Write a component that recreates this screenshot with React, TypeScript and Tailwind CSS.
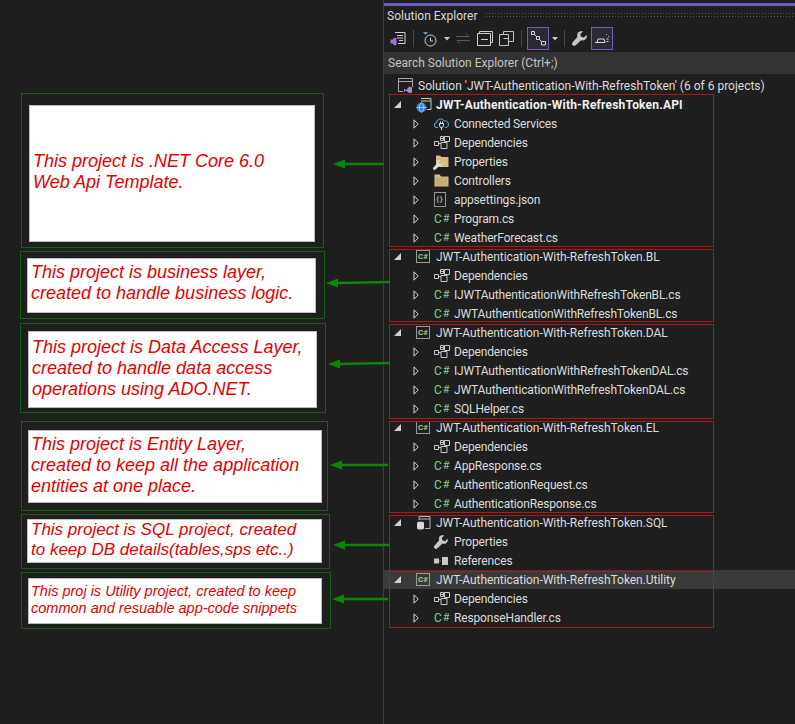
import type { ReactNode } from "react";

const notes = [
  {
    box: "mt-[93px] ml-[21px] h-[155px] w-[303px] pt-[11px] pl-[7px]",
    card: "h-[137px] w-[286px] pt-[45px] pl-[3px] text-[18px] leading-[21px]",
    lines: ["This project is .NET Core 6.0", "Web Api Template."],
  },
  {
    box: "mt-[3px] ml-[20px] h-[68px] w-[305px] pt-[6px] pl-[6px]",
    card: "h-[55px] w-[289px] pt-[3px] pl-[3px] text-[18px] leading-[21px]",
    lines: ["This project is business layer,", "created to handle business logic."],
  },
  {
    box: "mt-[4px] ml-[20px] h-[90px] w-[306px] pt-[7px] pl-[7px]",
    card: "h-[77px] w-[289px] pt-[5px] pl-[3px] text-[18px] leading-[21px]",
    lines: ["This project is Data Access Layer,", "created to handle data access", "operations using ADO.NET."],
  },
  {
    box: "mt-[8px] ml-[21px] h-[90px] w-[307px] pt-[8px] pl-[6px]",
    card: "h-[73px] w-[294px] pt-[3px] pl-[2px] text-[18px] leading-[21px]",
    lines: ["This project is Entity Layer,", "created to keep all the application", "entities at one place."],
  },
  {
    box: "mt-[3px] ml-[21px] h-[55px] w-[309px] pt-[4px] pl-[5px]",
    card: "h-[44px] w-[295px] pl-[3px] text-[17px] leading-[20px]",
    lines: ["This project is SQL project, created", "to keep DB details(tables,sps etc..)"],
  },
  {
    box: "mt-[3px] ml-[21px] h-[57px] w-[310px] pt-[5px] pl-[6px]",
    card: "h-[46px] w-[294px] pt-[4px] pl-[2px] text-[14.5px] leading-[17px]",
    lines: ["This proj is Utility project, created to keep", "common and resuable app-code snippets"],
  },
];

const redBoxes = [
  "top-[94px] h-[153px]",
  "top-[249px] h-[73px]",
  "top-[324px] h-[95px]",
  "top-[421px] h-[92px]",
  "top-[515px] h-[57px]",
  "top-[571px] h-[57px]",
];

const arrows = [
  { x1: 333, y1: 164, x2: 384, y2: 164 },
  { x1: 326, y1: 283, x2: 390, y2: 282 },
  { x1: 328, y1: 364, x2: 389, y2: 363 },
  { x1: 330, y1: 465, x2: 388, y2: 465 },
  { x1: 333, y1: 545, x2: 389, y2: 545 },
  { x1: 332, y1: 599, x2: 388, y2: 599 },
];

function Chevron() {
  return (
    <svg width="6" height="10" viewBox="0 0 6 10" fill="none">
      <path d="M1 .8v8.400L5.200 5z" stroke="#d4d4d4" />
    </svg>
  );
}

function Expanded() {
  return (
    <svg width="7" height="7" viewBox="0 0 7 7">
      <path d="M7 0v7H0z" fill="#cfcfcf" />
    </svg>
  );
}

function CsFile() {
  return (
    <span className="flex w-[15px] items-center text-[12px] leading-none font-normal text-[#85cc8a]">
      C<span className="ml-px text-[11px]">#</span>
    </span>
  );
}

function CsProject() {
  return (
    <span className="flex h-[13px] w-[14px] items-center justify-center border border-[#9a9a9a] text-[8px] leading-none font-bold text-[#8fce93]">
      C#
    </span>
  );
}

function ApiProject() {
  return (
    <svg width="16" height="16" viewBox="0 0 16 16" fill="none">
      <path d="M5 1.500h10v11H11" stroke="#c8c8c8" />
      <path d="M5 4h10" stroke="#c8c8c8" />
      <circle cx="5.500" cy="10.500" r="5" fill="#2f7fd6" />
      <path d="M.5 10.500h10M5.500 5.500c-3 3-3 7 0 10M5.500 5.500c3 3 3 7 0 10" stroke="#bcdcff" strokeWidth=".8" />
    </svg>
  );
}

function SqlProject() {
  return (
    <svg width="15" height="15" viewBox="0 0 15 15" fill="none">
      <path d="M3 5V1.500h11v12H9M3 4h11" stroke="#b5b5b5" />
      <ellipse cx="4.500" cy="8" rx="3.500" ry="1.500" fill="#d8d8d8" />
      <path d="M1 8v5c0 1 1.500 1.500 3.500 1.500S8 14 8 13V8z" fill="#d8d8d8" />
    </svg>
  );
}

function Deps() {
  return (
    <svg width="16" height="13" viewBox="0 0 16 13" fill="none" stroke="#c8c8c8">
      <path d="M.5 5.500h4v4h-4zM4.500 7.500H7M7 2.500h3M10.500.5h5v5h-5zM6.500.5h3v4h-3zM7 6.500h6v6H7z" />
    </svg>
  );
}

function Wrench({ color = "#c8c8c8", size = 14 }: { color?: string; size?: number }) {
  return (
    <svg width={size} height={size} viewBox="0 0 16 16">
      <path
        d="M15.500 4.200 12.600 7l-3-.9L8.800 3.300 11.700.5c-2-.7-4.200-.2-5.300 1.300-1 1.300-1 3-.5 4.300L.7 12a2.200 2.200 0 0 0 3.200 3.100l5.800-5.300c1.400.5 3.100.3 4.400-.8 1.500-1.200 2.100-3 1.400-4.800z"
        fill={color}
      />
    </svg>
  );
}

function PropsFolder() {
  return (
    <span className="relative block h-[15px] w-[15px]">
      <svg width="15" height="15" viewBox="0 0 15 15">
        <path d="M2 1.500h4l1.500 1.500h7v10H2z" fill="#d9bc84" />
      </svg>
      <span className="absolute -bottom-px -left-px">
        <Wrench color="#dcdcdc" size={10} />
      </span>
    </span>
  );
}

function Folder() {
  return (
    <svg width="15" height="13" viewBox="0 0 15 13">
      <path d="M.5.500h5L7 2.500h7.500v10H.5z" fill="#d9bc84" />
      <path d="M1.500 3.500h12v8h-12z" fill="#c9ab74" />
    </svg>
  );
}

function JsonFile() {
  return (
    <span className="flex h-[15px] w-[12px] items-center justify-center border border-[#909090] text-[8px] leading-none tracking-[1px] text-[#d0d0d0]">
      {"{}"}
    </span>
  );
}

function Cloud() {
  return (
    <svg width="15" height="13" viewBox="0 0 15 13" fill="none">
      <path d="M4 10.500H3a2.500 2.500 0 0 1-.4-5 4 4 0 0 1 7.600-1.400 3.200 3.200 0 0 1 1.800 6.400H11" stroke="#58b6d8" />
      <path d="M5.500 6.500h4v2a2 2 0 0 1-4 0zM7.500 10.500v2.500M6.500 4.500v2M8.500 4.500v2" stroke="#d5ecf4" />
    </svg>
  );
}

function Refs() {
  return (
    <svg width="14" height="8" viewBox="0 0 14 8">
      <path d="M0 1.500h5v5H0zM8 0h6v8H8z" fill="#c8c8c8" />
      <path d="M5.500 4h2" stroke="#c8c8c8" strokeDasharray="1 1" />
    </svg>
  );
}

function SolutionIcon() {
  return (
    <svg width="15" height="15" viewBox="0 0 15 15" fill="none">
      <path d="M.5 13.500V.5h14V9M.5 3.500h14M.5 13.500H5" stroke="#a8a8a8" />
      <path d="M6 10.500l2 1.500 3.500-3.500 2.500 1v5l-2.500 1L8 12.500 6 14z" fill="#b083e0" />
    </svg>
  );
}

function Project({ icon, name, bold, active }: { icon: ReactNode; name: string; bold?: boolean; active?: boolean }) {
  return (
    <div className={active ? "flex h-[19px] items-center bg-[#3a3a3a] pl-[10px]" : "flex h-[19px] items-center pl-[10px]"}>
      <span className="flex w-[22px] items-center">
        <Expanded />
      </span>
      <span className="flex w-5 items-center">{icon}</span>
      <span className={bold ? "font-bold tracking-[0.2px] text-[#f0f0f0]" : "tracking-[-0.05px]"}>{name}</span>
    </div>
  );
}

function Item({ icon, name, leaf }: { icon: ReactNode; name: string; leaf?: boolean }) {
  return (
    <div className="flex h-[19px] items-center pl-[29px]">
      <span className="flex w-[21px] items-center">{leaf ? null : <Chevron />}</span>
      <span className="flex w-5 items-center">{icon}</span>
      <span className="tracking-[-0.15px]">{name}</span>
    </div>
  );
}

function ToolbarIcons() {
  return (
    <div className="flex h-[27px] items-center pl-[6px]">
      <svg width="16" height="16" viewBox="0 0 16 16" fill="none">
        <path d="M5 1.500h10v11H8M7 4.500h6M7 7h6M9 9.500h4" stroke="#d0d0d0" />
        <path d="M.5 8l1.500 1 2.500-2.500 2 .8v6.400l-2 .8L2 12l-1.500 1z" fill="#a06fd8" />
      </svg>
      <span className="ml-[7px] h-[17px] w-px bg-[#4a4a4a]" />
      <svg className="ml-[9px]" width="14" height="16" viewBox="0 0 14 16" fill="none">
        <path d="M0 1h5L2.500 4z" fill="#4ea1e0" />
        <circle cx="7.500" cy="9.500" r="5.500" stroke="#d0d0d0" />
        <path d="M7.500 6.500v3.500H10" stroke="#d0d0d0" />
      </svg>
      <svg className="ml-[7px]" width="6" height="4" viewBox="0 0 6 4">
        <path d="M0 0h6L3 3.500z" fill="#c8c8c8" />
      </svg>
      <svg className="ml-[6px]" width="14" height="11" viewBox="0 0 14 11" fill="none" stroke="#5a5a5a">
        <path d="M0 3.500h13L10 .5M14 7.500H1L4 10.500" />
      </svg>
      <svg className="ml-[7px]" width="16" height="15" viewBox="0 0 16 15" fill="none" stroke="#d0d0d0">
        <path d="M.5 2.500h13v12H.5zM2.500 2.500V.5h13v11h-2M4 8.500h7" />
      </svg>
      <svg className="ml-[6px]" width="15" height="15" viewBox="0 0 15 15" fill="none" stroke="#c0c0c0">
        <path d="M.5 3.500h9v11h-9zM4.500 3.500V.5h10v10h-5M4.500 7.500h5v7" />
      </svg>
      <span className="ml-[7px] h-[17px] w-px bg-[#4a4a4a]" />
      <span className="ml-[5px] flex h-[23px] w-[22px] items-center justify-center border border-[#6c60b8] bg-[#2a2a34]">
        <svg width="15" height="15" viewBox="0 0 15 15" fill="none" stroke="#d8d8d8">
          <path d="M.5.500h3v3h-3zM5.500 5.500h3v3h-3zM10.500 10.500h4v3.500h-4zM3.500 3.500l2 2M8.500 8.500l2 2" />
        </svg>
      </span>
      <svg className="ml-[3px]" width="6" height="4" viewBox="0 0 6 4">
        <path d="M0 0h6L3 3.500z" fill="#c8c8c8" />
      </svg>
      <span className="ml-[6px] h-[17px] w-px bg-[#4a4a4a]" />
      <span className="ml-[7px]">
        <Wrench size={15} />
      </span>
      <span className="ml-[4px] flex h-[23px] w-[22px] items-center justify-center border border-[#6c60b8] bg-[#2a2a34]">
        <svg width="16" height="11" viewBox="0 0 16 11" fill="none">
          <path d="M1 9.500h10M3 9.500l1-3.500h6l1 3.500M12.500 6h2M12.500 8.500h2" stroke="#d8d8d8" />
          <path d="M12 1h1v1h-1zM14 3h1v1h-1z" fill="#d9a05a" />
        </svg>
      </span>
    </div>
  );
}

export default function App() {
  return (
    <div className="relative flex h-[724px] w-[795px] overflow-hidden bg-[#1f1f1f] font-['Roboto',sans-serif]">
      <div className="w-[383px] shrink-0 font-['Liberation_Sans',sans-serif]">
        {notes.map((note) => (
          <div key={note.lines[0]} className={`border border-[#166016] ${note.box}`}>
            <div className={`border border-[#bdbdbd] bg-white text-[#e60000] italic ${note.card}`}>
              {note.lines.map((line) => (
                <p key={line} className="whitespace-nowrap">
                  {line}
                </p>
              ))}
            </div>
          </div>
        ))}
      </div>

      <div className="flex-1 border-l border-[#3e3e3e]">
        <div className="mt-[3px] h-[3px] bg-[#6a5cc4]" />
        <div className="flex h-[19px] items-center pl-[3px] text-[12px] text-[#d8d8d8]">
          <span className="whitespace-nowrap">Solution Explorer</span>
          <span className="ml-[8px] h-[7px] flex-1 bg-[radial-gradient(#5a5a5a_0.7px,transparent_0.8px)] bg-[length:3px_3px]" />
        </div>
        <ToolbarIcons />
        <div className="flex h-[22px] items-center bg-[#333333] pl-[4px] text-[12px] text-[#c4c4c4]">
          Search Solution Explorer (Ctrl+;)
        </div>
        <div className="mt-[2px] whitespace-nowrap text-[12px] text-[#dcdcdc]">
          <div className="flex h-[19px] items-center pl-[14px]">
            <span className="flex w-5 items-center">
              <SolutionIcon />
            </span>
            Solution 'JWT-Authentication-With-RefreshToken' (6 of 6 projects)
          </div>
          <Project icon={<ApiProject />} name="JWT-Authentication-With-RefreshToken.API" bold />
          <Item icon={<Cloud />} name="Connected Services" />
          <Item icon={<Deps />} name="Dependencies" />
          <Item icon={<PropsFolder />} name="Properties" />
          <Item icon={<Folder />} name="Controllers" />
          <Item icon={<JsonFile />} name="appsettings.json" />
          <Item icon={<CsFile />} name="Program.cs" />
          <Item icon={<CsFile />} name="WeatherForecast.cs" />
          <Project icon={<CsProject />} name="JWT-Authentication-With-RefreshToken.BL" />
          <Item icon={<Deps />} name="Dependencies" />
          <Item icon={<CsFile />} name="IJWTAuthenticationWithRefreshTokenBL.cs" />
          <Item icon={<CsFile />} name="JWTAuthenticationWithRefreshTokenBL.cs" />
          <Project icon={<CsProject />} name="JWT-Authentication-With-RefreshToken.DAL" />
          <Item icon={<Deps />} name="Dependencies" />
          <Item icon={<CsFile />} name="IJWTAuthenticationWithRefreshTokenDAL.cs" />
          <Item icon={<CsFile />} name="JWTAuthenticationWithRefreshTokenDAL.cs" />
          <Item icon={<CsFile />} name="SQLHelper.cs" />
          <Project icon={<CsProject />} name="JWT-Authentication-With-RefreshToken.EL" />
          <Item icon={<Deps />} name="Dependencies" />
          <Item icon={<CsFile />} name="AppResponse.cs" />
          <Item icon={<CsFile />} name="AuthenticationRequest.cs" />
          <Item icon={<CsFile />} name="AuthenticationResponse.cs" />
          <Project icon={<SqlProject />} name="JWT-Authentication-With-RefreshToken.SQL" />
          <Item icon={<Wrench />} name="Properties" leaf />
          <Item icon={<Refs />} name="References" leaf />
          <Project icon={<CsProject />} name="JWT-Authentication-With-RefreshToken.Utility" active />
          <Item icon={<Deps />} name="Dependencies" />
          <Item icon={<CsFile />} name="ResponseHandler.cs" />
        </div>
      </div>

      {/* hand drawn annotations on top of the tree */}
      {redBoxes.map((pos) => (
        <div key={pos} className={`pointer-events-none absolute left-[389px] w-[325px] border border-[#a81a1a] ${pos}`} />
      ))}
      <svg className="pointer-events-none absolute inset-0" width="795" height="724" viewBox="0 0 795 724">
        {arrows.map((a) => (
          <g key={a.y1}>
            <path d={`M${a.x1 + 10} ${a.y1}L${a.x2} ${a.y2}`} stroke="#0b860b" strokeWidth="2.5" />
            <path d={`M${a.x1} ${a.y1}l12-4.500v9z`} fill="#0b860b" />
          </g>
        ))}
      </svg>
    </div>
  );
}
